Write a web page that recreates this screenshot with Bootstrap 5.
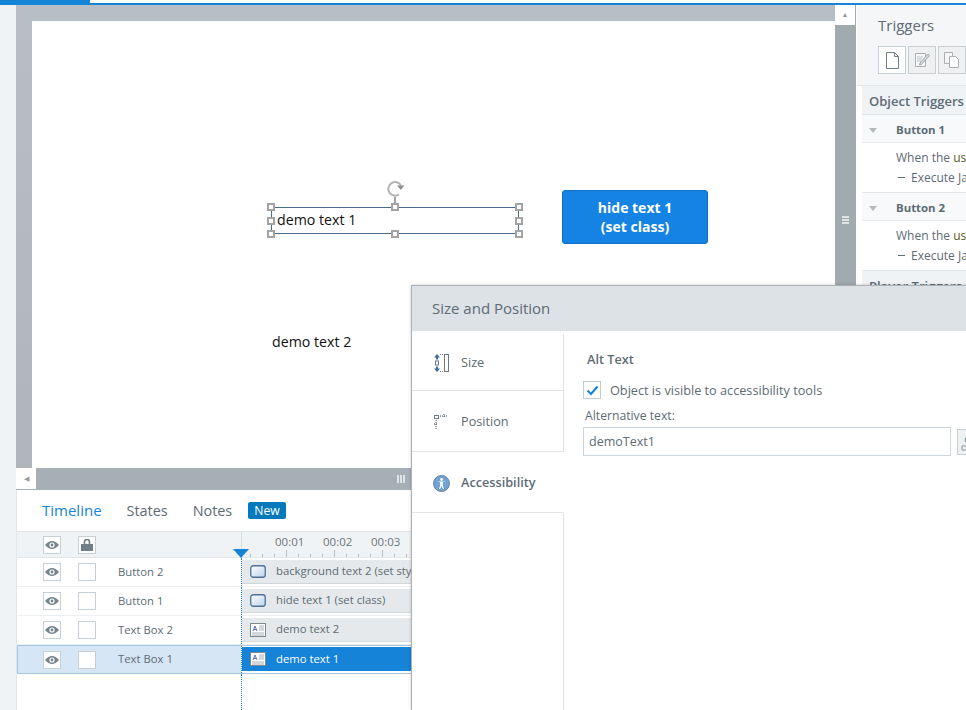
<!DOCTYPE html>
<html lang="en"><head><meta charset="utf-8"><title>Size and Position</title>
<link href="https://cdn.jsdelivr.net/npm/bootstrap@5.3.0/dist/css/bootstrap.min.css" rel="stylesheet">
<style>
html,body{height:710px;overflow:hidden;background:#fff}
body{font-family:"Open Sans","Noto Sans",sans-serif;font-size:12px;color:#5d6b75;position:relative;width:966px}
.topgap{height:3px;background:#fff}
.topline{height:2px;background:#1583d8}
.topactive{position:absolute;left:0;top:0;width:90px;height:4px;background:#1583d8}
.shell{height:705px}
.leftstrip{width:16px;background:#f0f3f6;flex:none}
.centre{width:841px;flex:none}
.stagewrap{height:485px}
.stagecol{width:819px;flex:none}
.stage{height:463px;padding:16px 0 0 16px;background:linear-gradient(#b7bec4,#aeb6bc)}
.slide{background:#fff;height:447px;position:relative;color:#111;font-size:14.2px}
.hscroll{height:22px;background:#a6aeb6;position:relative}
.harrow{width:20px;height:21px;background:#fff;color:#999;font-size:7px;line-height:21px;text-align:center}
.grip{position:absolute;left:381px;top:7px;width:9px;height:8px;background:repeating-linear-gradient(90deg,#dfe3e6 0 2px,transparent 2px 3px)}
.vscroll{width:21px;background:#a1aaae;position:relative;flex:none;margin-right:1px}
.varrow{width:20px;height:20px;background:#fff;color:#999;font-size:7px;line-height:20px;text-align:center}
.vgrip{position:absolute;left:7px;top:211px;width:7px;height:8px;background:repeating-linear-gradient(#dfe3e6 0 2px,transparent 2px 3px)}
.objtext{position:absolute;left:240px;white-space:nowrap}
.selbox{position:absolute;left:239px;top:186px;width:248px;height:27px;border:1px solid #4a6b8a;padding:0 5px;line-height:24px}
.hnd{position:absolute;width:8px;height:8px;background:#fff;border:2px solid #a3a3a3}
.stem{position:absolute;left:362px;top:176px;width:2px;height:10px;background:#a3a3a3}
.rot{position:absolute;left:355px;top:159px}
.slidebtn{position:absolute;left:530px;top:169px;width:146px;height:54px;background:#1583e4;border:1px solid #106fbe;border-radius:3px;color:#fff;font-weight:700;font-size:14px;line-height:19px}
.leftline{border-left:1px solid #e4e7e9}
.tabs{height:41px;padding-left:25px;font-size:14.4px;gap:25px;color:#5d6b75}
.tabon{color:#1583d8;font-size:15px}
.newtag{background:#0579bb;color:#fff;font-size:12.2px;border-radius:2px;padding:0 6px;line-height:17px;margin-left:-9px}
.gridhead{height:27px;background:#f0f3f6;border-top:1px solid #e2e6e9;border-bottom:1px solid #e2e6e9}
.trow{height:29px;border-bottom:1px solid #eceff1;font-size:11.3px}
.trow.pick{background:#d6e6f5;border:1px solid #a5c6e2;border-right:0}
.namecol{width:224px;flex:none;align-items:center;padding-left:26px}
.cell{width:18px;height:18px;border:1px solid #c7d0d6;background:#fff;margin-right:17px;flex:none}
.rowname{margin-left:5px;color:#5d6b75}
.trackcol{flex:1;border-left:1px dotted #1583d8;position:relative;padding-top:2px;overflow:hidden;background:#fff}
.bar{height:24px;background:#e5e9eb;border-bottom:1px solid #d0d6da;padding-left:8px;gap:10px;white-space:nowrap;color:#5d6b75}
.pick .trackcol{padding-top:1px}
.pick .bar{background:#1583d8;color:#fff;border:0;height:24px}
.ruler{height:25px;flex:1;border-left:1px solid #d8dde1;position:relative;font-size:11.5px;color:#6b7780}
.tick{position:absolute;top:1px;white-space:nowrap}
.ticks{position:absolute;left:8px;right:0;bottom:0;height:3px;background:repeating-linear-gradient(90deg,#b8bfc5 0 1px,transparent 1px 12px)}
.ticksbig{position:absolute;left:44px;right:0;bottom:0;height:7px;background:repeating-linear-gradient(90deg,#b8bfc5 0 1px,transparent 1px 48px)}
.playhead{position:absolute;left:-9px;bottom:-1px;width:0;height:0;border-left:8px solid transparent;border-right:8px solid transparent;border-top:9px solid #1583d8}
.below{flex:1;position:relative}
.below .trackcol{margin-left:224px;height:100%}
.rightpanel{flex:1;background:#f4f6f8;overflow:hidden;margin-top:1px}
.rhead{height:80px;padding:8px 0 0 21px;border-bottom:1px solid #e2e6e9}
.rtitle{font-size:15px;color:#5d6b75;line-height:23px;margin-bottom:9px}
.rbtn{width:28px;height:28px;background:#eef0f1;border:1px solid #c9ced2;flex:none;margin-right:2px}
.rbtn.on{background:#fff;border-color:#c3d0d9}
.rbody{padding-left:5px;background:#fff;white-space:nowrap;height:220px}
.sect{height:29px;padding-left:7px;background:#f0f3f6;border-bottom:1px solid #e2e6e9;font-size:13px;font-weight:600;line-height:30px}
.trighead{height:28px;background:#f8f9fa;border-bottom:1px solid #e8ebed;font-weight:700;font-size:11.4px;color:#5d6b75;line-height:29px}
.tri{display:inline-block;width:0;height:0;border-left:4px solid transparent;border-right:4px solid transparent;border-top:5px solid #b3b9bd;margin:0 19px 1px 7px}
.trigbody{height:50px;border-bottom:1px solid #e2e6e9;padding:5px 0 0 34px;line-height:20px}
.yel{color:#5a5a1e}
.indent{padding-left:2px}
.dashmark{display:inline-block;width:7px;height:1px;background:#5d6b75;margin:0 6px 4px 0}
.dialog{position:absolute;left:411px;top:285px;width:555px;height:425px;background:#fff;border:1px solid #a9b1b7;border-right:0;border-bottom:0;box-shadow:0 0 3px rgba(0,0,0,.2)}
.dlghead{height:45px;background:#dde2e6;font-size:15px;padding-left:20px;color:#5d6b75;line-height:45px}
.dlgbody{height:379px}
.dtabs{width:152px;flex:none;border-right:1px solid #dfe3e6;margin-top:3px}
.dtab{height:57px;border-bottom:1px solid #dfe3e6;gap:11px;padding:2px 0 0 21px;font-size:12.7px;color:#5d6b75}
.dtab.t2,.dtab.t3{height:61px}
.dtab.t3{font-weight:600;border-right:1px solid #fff;margin-right:-1px}
.dicon{width:17px;flex:none}
.dform{padding:18px 0 0 19px;min-width:0}
.alttitle{font-size:12.7px;font-weight:600;line-height:20px;margin:0 0 12px 4px}
.chk{width:18px;height:18px;border:1px solid #c2ccd3;background:#fff;margin-right:9px;flex:none}
.chkrow{font-size:12.7px;line-height:18px}
.altlabel{font-size:12.2px;margin:8px 0 2px 2px;line-height:18px}
.alttxt{width:368px;height:29px;border:1px solid #ccd5db;padding:0 5px;line-height:27px;font-size:12.5px;color:#5d6b75;flex:none}
.altbtn{width:24px;height:26px;background:#eef0f1;border:1px solid #c9ced2;margin:2px 0 0 6px;flex:none;padding:4px 0 0 3px}
</style></head><body>
<div class="topactive"></div>
<div class="topgap"></div><div class="topline"></div>
<div class="shell d-flex">
 <div class="leftstrip"></div>
 <div class="centre d-flex flex-column">
  <div class="stagewrap d-flex">
   <div class="stagecol">
    <div class="stage">
     <div class="slide">
      <svg class="rot" width="18" height="18" viewBox="0 0 18 18"><path d="M12 14.500A6.800 6.800 0 1 1 14 5.500" fill="none" stroke="#b3b3b3" stroke-width="2"/><path d="M10 5.500h7.500l-3.700 4.500z" fill="#8f8f8f"/></svg>
      <div class="stem"></div>
      <div class="selbox">demo text 1</div>
      <div class="hnd" style="left:235px;top:182px"></div><div class="hnd" style="left:359px;top:182px"></div><div class="hnd" style="left:483px;top:182px"></div>
      <div class="hnd" style="left:235px;top:196px"></div><div class="hnd" style="left:483px;top:196px"></div>
      <div class="hnd" style="left:235px;top:209px"></div><div class="hnd" style="left:359px;top:209px"></div><div class="hnd" style="left:483px;top:209px"></div>
      <div class="slidebtn d-flex align-items-center justify-content-center text-center">hide text 1<br>(set class)</div>
      <div class="objtext" style="top:310px">demo text 2</div>
     </div>
    </div>
    <div class="hscroll"><div class="harrow">&#9664;</div><div class="grip"></div></div>
   </div>
   <div class="vscroll"><div class="varrow">&#9650;</div><div class="vgrip"></div></div>
  </div>
  <div class="leftline flex-grow-1 d-flex flex-column">
  <div class="tabs d-flex align-items-center">
   <span class="tabon">Timeline</span><span>States</span><span>Notes</span><span class="newtag">New</span>
  </div>
  <div class="gridhead d-flex">
   <div class="namecol d-flex">
    <div class="cell d-flex align-items-center justify-content-center"><svg width="14" height="10" viewBox="0 0 14 10"><path d="M0 5Q7-3 14 5Q7 13 0 5z" fill="#76848c"/><circle cx="7" cy="5" r="2.600" fill="#fff"/><circle cx="7" cy="5" r="1.400" fill="#76848c"/></svg></div>
    <div class="cell d-flex align-items-center justify-content-center"><svg width="12" height="12" viewBox="0 0 12 12"><path d="M3.500 6V3a2.500 2.500 0 0 1 5 0V6" fill="none" stroke="#6f7f88" stroke-width="1.600"/><rect x="0" y="5" width="12" height="7" fill="#6f7f88"/></svg></div>
   </div>
   <div class="ruler">
    <span class="tick" style="left:33px">00:01</span><span class="tick" style="left:81px">00:02</span><span class="tick" style="left:129px">00:03</span>
    <div class="ticks"></div><div class="ticksbig"></div><div class="playhead"></div>
   </div>
  </div>
  <div class="trow d-flex">
   <div class="namecol d-flex"><div class="cell d-flex align-items-center justify-content-center"><svg width="14" height="10" viewBox="0 0 14 10"><path d="M0 5Q7-3 14 5Q7 13 0 5z" fill="#76848c"/><circle cx="7" cy="5" r="2.600" fill="#fff"/><circle cx="7" cy="5" r="1.400" fill="#76848c"/></svg></div><div class="cell"></div><span class="rowname">Button 2</span></div>
   <div class="trackcol"><div class="bar d-flex align-items-center"><svg width="16" height="13" viewBox="0 0 16 13"><defs><linearGradient id="g" x1="0" y1="0" x2="1" y2="1"><stop offset="0" stop-color="#fff"/><stop offset="1" stop-color="#bcd3ea"/></linearGradient></defs><rect x=".75" y=".75" width="14.500" height="11.500" rx="2.500" fill="url(#g)" stroke="#4d7296" stroke-width="1.300"/></svg><span>background text 2 (set style)</span></div></div>
  </div>
  <div class="trow d-flex">
   <div class="namecol d-flex"><div class="cell d-flex align-items-center justify-content-center"><svg width="14" height="10" viewBox="0 0 14 10"><path d="M0 5Q7-3 14 5Q7 13 0 5z" fill="#76848c"/><circle cx="7" cy="5" r="2.600" fill="#fff"/><circle cx="7" cy="5" r="1.400" fill="#76848c"/></svg></div><div class="cell"></div><span class="rowname">Button 1</span></div>
   <div class="trackcol"><div class="bar d-flex align-items-center"><svg width="16" height="13" viewBox="0 0 16 13"><rect x=".75" y=".75" width="14.500" height="11.500" rx="2.500" fill="url(#g)" stroke="#4d7296" stroke-width="1.300"/></svg><span>hide text 1 (set class)</span></div></div>
  </div>
  <div class="trow d-flex">
   <div class="namecol d-flex"><div class="cell d-flex align-items-center justify-content-center"><svg width="14" height="10" viewBox="0 0 14 10"><path d="M0 5Q7-3 14 5Q7 13 0 5z" fill="#76848c"/><circle cx="7" cy="5" r="2.600" fill="#fff"/><circle cx="7" cy="5" r="1.400" fill="#76848c"/></svg></div><div class="cell"></div><span class="rowname">Text Box 2</span></div>
   <div class="trackcol"><div class="bar d-flex align-items-center"><svg width="16" height="14" viewBox="0 0 16 14"><rect x=".5" y=".5" width="15" height="13" fill="#fff" stroke="#7c8890"/><path d="M3 8l2-5 2 5M3.800 6.500h2.400" fill="none" stroke="#5a72b8"/><path d="M9 3h5M9 5h5M9 7h5M2 10h12M2 12h12" stroke="#a9b1b7"/></svg><span>demo text 2</span></div></div>
  </div>
  <div class="trow pick d-flex">
   <div class="namecol d-flex" style="width:223px;padding-left:25px"><div class="cell d-flex align-items-center justify-content-center"><svg width="14" height="10" viewBox="0 0 14 10"><path d="M0 5Q7-3 14 5Q7 13 0 5z" fill="#76848c"/><circle cx="7" cy="5" r="2.600" fill="#fff"/><circle cx="7" cy="5" r="1.400" fill="#76848c"/></svg></div><div class="cell"></div><span class="rowname">Text Box 1</span></div>
   <div class="trackcol"><div class="bar d-flex align-items-center"><svg width="16" height="14" viewBox="0 0 16 14"><rect x=".5" y=".5" width="15" height="13" fill="#fff" stroke="#7c8890"/><path d="M3 8l2-5 2 5M3.800 6.500h2.400" fill="none" stroke="#5a72b8"/><path d="M9 3h5M9 5h5M9 7h5M2 10h12M2 12h12" stroke="#a9b1b7"/></svg><span>demo text 1</span></div></div>
  </div>
  <div class="below"><div class="trackcol"></div></div>
  </div>
 </div>
 <div class="rightpanel">
  <div class="rhead">
   <div class="rtitle">Triggers</div>
   <div class="d-flex">
    <div class="rbtn on d-flex align-items-center justify-content-center"><svg width="13" height="17" viewBox="0 0 13 17"><path d="M.5.5h8l4 4v12H.5zM8.500.5v4h4" fill="#fff" stroke="#6f7f88"/></svg></div>
    <div class="rbtn d-flex align-items-center justify-content-center"><svg width="16" height="16" viewBox="0 0 16 16"><path d="M1.500 1.500h10v13h-10z" fill="#f8f8f8" stroke="#a9b0b5"/><path d="M3 5h6M3 7h5M3 9h4" stroke="#b9bfc4"/><path d="M6 11l8-9 1.500 1.500-8 9-2 .5z" fill="#d8dcdf" stroke="#8b949a" stroke-width=".8"/></svg></div>
    <div class="rbtn d-flex align-items-center justify-content-center"><svg width="16" height="16" viewBox="0 0 16 16"><path d="M.5.5h8v11h-8z" fill="#f6f6f6" stroke="#a9b0b5"/><path d="M5.500 4.500h6l3 3v8h-9z" fill="#fff" stroke="#a9b0b5"/></svg></div>
   </div>
  </div>
  <div class="rbody">
   <div class="sect">Object Triggers</div>
   <div class="trighead"><span class="tri"></span>Button 1</div>
   <div class="trigbody">When the <span class="yel">user clicks</span><div class="indent"><span class="dashmark"></span>Execute JavaScript</div></div>
   <div class="trighead"><span class="tri"></span>Button 2</div>
   <div class="trigbody">When the <span class="yel">user clicks</span><div class="indent"><span class="dashmark"></span>Execute JavaScript</div></div>
   <div class="sect">Player Triggers</div>
  </div>
 </div>
</div>
<div class="dialog">
 <div class="dlghead">Size and Position</div>
 <div class="dlgbody d-flex">
  <div class="dtabs">
   <div class="dtab d-flex align-items-center"><svg class="dicon" width="17" height="18" viewBox="0 0 17 18"><path d="M4 0l3 3.500H5v2H3v-2H1zM4 18l3-3.500H5v-2H3v2H1z" fill="#3f6f9c"/><rect x="2.500" y="7" width="3" height="4" fill="none" stroke="#6d7a83"/><path d="M7 .5h3M7 17.500h3" stroke="#6d7a83" stroke-dasharray="1 1"/><rect x="11.500" y=".5" width="4" height="17" fill="none" stroke="#6d7a83"/></svg><span>Size</span></div>
   <div class="dtab d-flex align-items-center t2"><svg class="dicon" width="17" height="16" viewBox="0 0 17 16"><rect x="1.500" y="1.500" width="4" height="3" fill="none" stroke="#6d7a83"/><path d="M7 2h2M13 2h2M11 0v4M9 2h4M3 6v9M1 10h4" stroke="#3a4954" stroke-dasharray="1 1"/></svg><span>Position</span></div>
   <div class="dtab d-flex align-items-center t3"><svg class="dicon" width="17" height="17" viewBox="0 0 17 17"><circle cx="8.500" cy="8.500" r="8" fill="#6ea3d3" stroke="#6a8199"/><circle cx="8.500" cy="4.500" r="1.400" fill="#fff"/><path d="M4 6.500l3.200.8v3L6 14h1l1.500-3 1.500 3h1l-1.200-3.700v-3L13 6.500z" fill="#fff"/></svg><span>Accessibility</span></div>
  </div>
  <div class="dform flex-grow-1">
   <div class="alttitle">Alt Text</div>
   <div class="chkrow d-flex align-items-center"><div class="chk d-flex align-items-center justify-content-center"><svg width="13" height="11" viewBox="0 0 13 11"><path d="M1.500 5.500l3.500 3.500 6.500-7.500" fill="none" stroke="#1583d8" stroke-width="2"/></svg></div><span>Object is visible to accessibility tools</span></div>
   <div class="altlabel">Alternative text:</div>
   <div class="d-flex"><div class="alttxt">demoText1</div><div class="altbtn"><svg width="14" height="15" viewBox="0 0 14 15"><circle cx="7" cy="4" r="3" fill="#eef0f1" stroke="#8b949a"/><path d="M1 14v-4h12v4z" fill="#eef0f1" stroke="#8b949a"/></svg></div></div>
  </div>
 </div>
</div>
</body></html>
